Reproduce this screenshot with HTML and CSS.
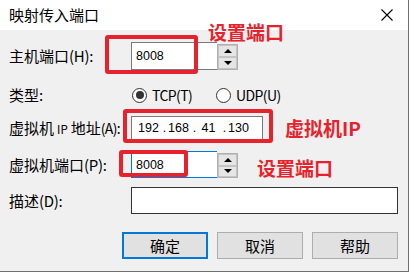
FILE: index.html
```html
<!DOCTYPE html>
<html lang="zh-CN">
<head>
<meta charset="utf-8">
<title>映射传入端口</title>
<link rel="stylesheet" href="styles.css">
</head>
<body>
<div class="dialog">
  <div class="titlebar">
    <span class="title">映射传入端口</span>
    <svg class="close" width="12" height="12" viewBox="0 0 12 12"><path d="M0.5 0.5 L11.5 11.5 M11.5 0.5 L0.5 11.5" stroke="#000" stroke-width="1.1" fill="none"/></svg>
  </div>
  <div class="body">
    <div class="row r1">
      <span class="lbl">主机端口<span class="lat">(H):</span></span>
      <div class="spinfield">
        <div class="field port">8008</div>
        <div class="spinner"><div class="sbtn"><span class="up"></span></div><div class="sbtn"><span class="down"></span></div></div>
      </div>
    </div>
    <div class="row r2">
      <span class="lbl">类型<span class="lat">:</span></span>
      <div class="opt"><span class="radio checked"></span><span class="otext">TCP(T)</span></div>
      <div class="opt"><span class="radio"></span><span class="otext">UDP(U)</span></div>
    </div>
    <div class="row r3">
      <span class="lbl">虚拟机<span class="ipsmall">IP</span>地址<span class="lat tight">(A):</span></span>
      <div class="field ip"><span class="seg">192</span><span class="dot">.</span><span class="seg">168</span><span class="dot">.</span><span class="seg">41</span><span class="dot">.</span><span class="seg">130</span></div>
    </div>
    <div class="row r4">
      <span class="lbl">虚拟机端口<span class="lat">(P):</span></span>
      <div class="spinfield">
        <div class="field port focus">8008</div>
        <div class="spinner"><div class="sbtn"><span class="up"></span></div><div class="sbtn"><span class="down"></span></div></div>
      </div>
    </div>
    <div class="row r5">
      <span class="lbl">描述<span class="lat">(D):</span></span>
      <div class="field desc"></div>
    </div>
    <div class="buttons">
      <div class="btn default">确定</div>
      <div class="btn">取消</div>
      <div class="btn">帮助</div>
    </div>
  </div>
  <div class="mark box1"></div>
  <div class="mark box2"></div>
  <div class="mark box3"></div>
  <div class="note note1">设置端口</div>
  <div class="note note2">虚拟机IP</div>
  <div class="note note3">设置端口</div>
</div>
</body>
</html>
```
FILE: styles.css
```css
* { box-sizing: border-box; }
html, body { margin: 0; padding: 0; background: #fff; }
body {
  font-family: "Noto Sans CJK SC", "Noto Sans", sans-serif;
  font-size: 15px;
  color: #000;
  width: 409px;
  height: 274px;
  overflow: hidden;
}
.dialog {
  position: relative;
  width: 409px;
  height: 272px;
  background: #f0f0f0;
  border-right: 1px solid #707070;
  border-bottom: 1px solid #707070;
}
.titlebar {
  height: 30px;
  background: #fff;
  display: flex;
  align-items: center;
  justify-content: space-between;
  padding: 0 15px 0 9px;
}
.title { line-height: 30px; }
.close { display: block; }
.body { padding: 12px 10px 0 9px; }
.row { display: flex; align-items: center; }
.lbl { width: 122px; flex: none; line-height: 20px; white-space: nowrap; }
.lat { letter-spacing: -0.3px; }
.lat.tight { font-size: 14px; letter-spacing: -0.6px; }
.ipsmall { font-size: 11.5px; margin: 0 3px 0 3px; }
.r1 { height: 28px; }
.r2 { height: 22px; margin-top: 14px; }
.r3 { height: 24px; margin-top: 10px; }
.r4 { height: 27px; margin-top: 11px; }
.r5 { height: 27px; margin-top: 9px; }

.field {
  height: 100%;
  background: #fff;
  border: 1px solid #7a7a7a;
  font-family: "Liberation Sans", Arial, sans-serif;
  font-size: 12.5px;
  display: flex;
  align-items: center;
  padding-left: 4px;
}
.spinfield { display: flex; height: 100%; }
.port { width: 86px; border-right: none; }
.focus { border-color: #0078d7; }
.spinner {
  width: 21px;
  margin-top: 2px;
  display: flex;
  flex-direction: column;
  border: 1px solid #b0b0b0;
  background: #e8e8e8;
}
.sbtn {
  flex: 1;
  display: flex;
  align-items: center;
  justify-content: center;
  border: 1px solid #c4c4c4;
  background: #e5e5e5;
}
.up, .down { width: 0; height: 0; border-left: 4px solid transparent; border-right: 4px solid transparent; }
.up { border-bottom: 4px solid #000; }
.down { border-top: 4px solid #000; }

.opt { display: flex; align-items: center; gap: 5px; width: 84px; flex: none; }
.opt:first-of-type { margin-left: 1px; }
.otext { font-size: 14px; letter-spacing: -0.6px; }
.radio {
  width: 15px;
  height: 15px;
  border-radius: 50%;
  border: 1px solid #333;
  background: #fff;
  display: flex;
  align-items: center;
  justify-content: center;
  flex: none;
}
.radio.checked::after {
  content: "";
  width: 8px;
  height: 8px;
  border-radius: 50%;
  background: #333;
}

.ip { width: 132px; padding-left: 6px; }
.seg { width: 21px; text-align: center; }
.dot { width: 9px; padding-left: 2px; text-align: center; }
.desc { width: 268px; border-color: #333; }

.buttons {
  display: flex;
  justify-content: flex-end;
  gap: 9px;
  margin-top: 18px;
}
.btn {
  width: 86px;
  height: 27px;
  border: 1px solid #adadad;
  background: #e1e1e1;
  display: flex;
  align-items: center;
  justify-content: center;
  line-height: 1;
}
.btn.default { border: 2px solid #0078d7; }

.mark {
  position: absolute;
  border: 4px solid #e6232c;
  border-radius: 3px;
}
.box1 { left: 105px; top: 35px; width: 93px; height: 39px; }
.box2 { left: 123px; top: 109px; width: 150px; height: 34px; }
.box3 { left: 119px; top: 150px; width: 69px; height: 27px; }

.note {
  position: absolute;
  color: #e6232c;
  font-weight: bold;
  font-size: 19px;
  line-height: 19px;
  white-space: nowrap;
}
.note1 { left: 208px; top: 22px; }
.note2 { left: 285px; top: 118px; }
.note3 { left: 257px; top: 158px; }
```
